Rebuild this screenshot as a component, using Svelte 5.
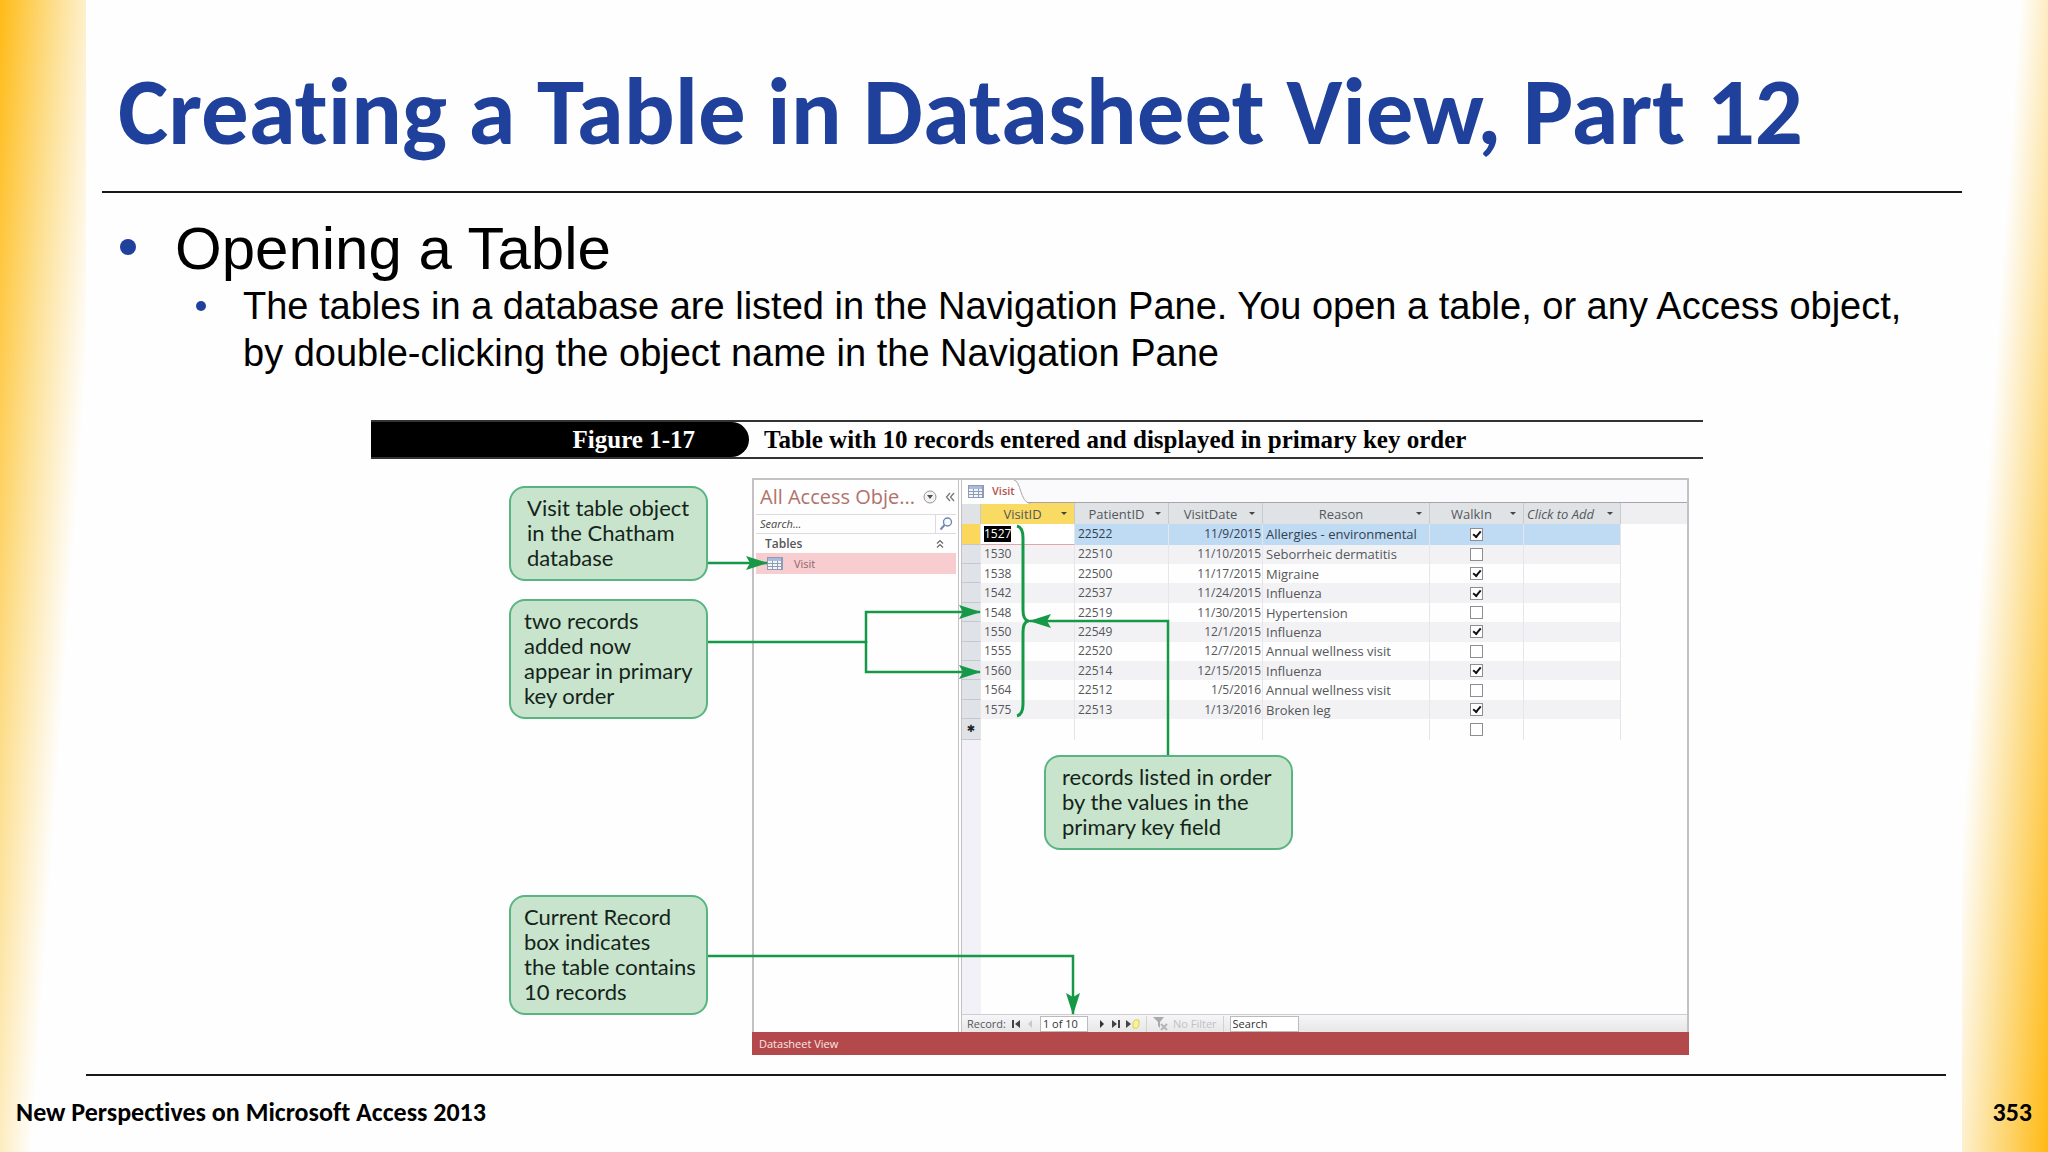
<script>
  const columns = ['VisitID', 'PatientID', 'VisitDate', 'Reason', 'WalkIn', 'Click to Add'];

  let records = [
    { id: 1527, patient: 22522, date: '11/9/2015', reason: 'Allergies - environmental', walkIn: true },
    { id: 1530, patient: 22510, date: '11/10/2015', reason: 'Seborrheic dermatitis', walkIn: false },
    { id: 1538, patient: 22500, date: '11/17/2015', reason: 'Migraine', walkIn: true },
    { id: 1542, patient: 22537, date: '11/24/2015', reason: 'Influenza', walkIn: true },
    { id: 1548, patient: 22519, date: '11/30/2015', reason: 'Hypertension', walkIn: false },
    { id: 1550, patient: 22549, date: '12/1/2015', reason: 'Influenza', walkIn: true },
    { id: 1555, patient: 22520, date: '12/7/2015', reason: 'Annual wellness visit', walkIn: false },
    { id: 1560, patient: 22514, date: '12/15/2015', reason: 'Influenza', walkIn: true },
    { id: 1564, patient: 22512, date: '1/5/2016', reason: 'Annual wellness visit', walkIn: false },
    { id: 1575, patient: 22513, date: '1/13/2016', reason: 'Broken leg', walkIn: true }
  ];

  let currentRecord = '1 of 10';
  let recordSearch = 'Search';
  let newWalkIn = false;
</script>

{#snippet tableIcon()}
  <svg class="table-icon" viewBox="0 0 16 13" aria-hidden="true">
    <rect x="0" y="0" width="16" height="13" fill="#8d9bb5" />
    <rect x="1" y="1" width="13" height="3" fill="#a9bbd9" />
    <path d="M1 4h4v2H1zM6 4h4v2H6zM11 4h3v2h-3zM1 7h4v2H1zM6 7h4v2H6zM11 7h3v2h-3zM1 10h4v2H1zM6 10h4v2H6zM11 10h3v2h-3z" fill="#f2f6fc" />
  </svg>
{/snippet}

<div class="slide">
  <header>
    <h1>Creating a Table in Datasheet View, Part 12</h1>
  </header>

  <main>
    <ul class="points">
      <li>
        <p class="point">Opening a Table</p>
        <ul>
          <li>
            <p class="point sub">
              <span>The tables in a database are listed in the Navigation Pane. You open a table, or any Access object, by double-clicking the object name in the Navigation Pane</span>
            </p>
          </li>
        </ul>
      </li>
    </ul>

    <figure>
      <figcaption>
        <span class="number">Figure 1-17</span>
        <span class="caption">Table with 10 records entered and displayed in primary key order</span>
      </figcaption>

      <div class="window">
        <div class="panes">
          <nav>
            <div class="nav-title">
              <span>All Access Obje...</span>
              <button aria-label="Category">
                <svg width="14" height="14" viewBox="0 0 14 14">
                  <circle cx="7" cy="7" r="6" fill="#f4f2f2" stroke="#9a9494" />
                  <path d="M4 5h6L7 9z" fill="#554f4f" />
                </svg>
              </button>
              <button aria-label="Collapse">
                <svg width="10" height="10" viewBox="0 0 10 10">
                  <path d="M5 1L1.500 5L5 9M9 1L5.500 5L9 9" fill="none" stroke="#777" stroke-width="1.300" />
                </svg>
              </button>
            </div>
            <div class="nav-search">
              <input type="text" placeholder="Search..." aria-label="Search objects" />
              <button aria-label="Find">
                <svg width="14" height="14" viewBox="0 0 14 14">
                  <circle cx="8.500" cy="5" r="4" fill="#f7faff" stroke="#7189b0" stroke-width="1.400" />
                  <path d="M5.500 8L1.500 12.500" stroke="#7189b0" stroke-width="2" />
                </svg>
              </button>
            </div>
            <div class="nav-group">
              <span>Tables</span>
              <svg width="8" height="10" viewBox="0 0 8 10">
                <path d="M1 4.500L4 1.500L7 4.500M1 8.500L4 5.500L7 8.500" fill="none" stroke="#666" stroke-width="1.200" />
              </svg>
            </div>
            <a class="nav-item" href="#visit">{@render tableIcon()} Visit</a>
          </nav>

          <section class="sheet" id="visit">
            <div class="tabs">
              <svg class="tab-shape" viewBox="0 0 68 24" aria-hidden="true">
                <path d="M0 24V0H52C59 1 58 22 68 23.500V24" fill="#fefefe" />
                <path d="M52 0C59 1 58 22 68 23.500" fill="none" stroke="#a9a5a7" />
              </svg>
              <span class="tab">{@render tableIcon()} Visit</span>
            </div>
            <div class="grid">
              <table>
                <colgroup>
                  <col class="c-select" />
                  <col class="c-id" />
                  <col class="c-id" />
                  <col class="c-id" />
                  <col class="c-reason" />
                  <col class="c-id" />
                  <col class="c-add" />
                </colgroup>
                <thead>
                  <tr>
                    <th class="selector"></th>
                    {#each columns as column, i}
                      <th class:active={i === 0} class:add={i === 5}>
                        <button><span>{column}</span><i></i></button>
                      </th>
                    {/each}
                    <th class="rest"></th>
                  </tr>
                </thead>
                <tbody>
                  {#each records as record, i}
                    <tr class:current={i === 0}>
                      <td class="selector"></td>
                      <td class="id"><span>{record.id}</span></td>
                      <td>{record.patient}</td>
                      <td class="date">{record.date}</td>
                      <td class="reason">{record.reason}</td>
                      <td class="check">
                        <input type="checkbox" bind:checked={record.walkIn} aria-label="WalkIn {record.id}" />
                      </td>
                      <td></td>
                      <td class="rest"></td>
                    </tr>
                  {/each}
                  <tr>
                    <td class="selector star">✱</td>
                    <td></td>
                    <td></td>
                    <td></td>
                    <td></td>
                    <td class="check">
                      <input type="checkbox" bind:checked={newWalkIn} aria-label="WalkIn new record" />
                    </td>
                    <td></td>
                    <td class="rest"></td>
                  </tr>
                </tbody>
              </table>
            </div>
            <div class="record-bar">
              <label for="record">Record:</label>
              <button aria-label="First record">
                <svg width="8" height="8" viewBox="0 0 8 8"><path d="M0 0h2v8H0zM8 0v8L3 4z" fill="#444" /></svg>
              </button>
              <button aria-label="Previous record">
                <svg width="8" height="8" viewBox="0 0 8 8"><path d="M6 0v8L2 4z" fill="#c9c9cc" /></svg>
              </button>
              <input id="record" class="position" type="text" bind:value={currentRecord} />
              <button aria-label="Next record">
                <svg width="8" height="8" viewBox="0 0 8 8"><path d="M2 0v8l4-4z" fill="#333" /></svg>
              </button>
              <button aria-label="Last record">
                <svg width="8" height="8" viewBox="0 0 8 8"><path d="M0 0v8l5-4zM6 0h2v8H6z" fill="#444" /></svg>
              </button>
              <button aria-label="New record">
                <svg width="14" height="10" viewBox="0 0 14 10">
                  <path d="M0 1v8l5-4z" fill="#444" />
                  <path d="M7 3l2-2h4v6l-2 2H7z" fill="#f6efae" stroke="#e2d23c" />
                </svg>
              </button>
              <span class="filter">
                <svg width="16" height="15" viewBox="0 0 16 15">
                  <path d="M0 1h11L7 6v6L5 10V6z" fill="#aaa9ac" />
                  <path d="M8 8l6 6M14 8l-6 6" stroke="#b5b4b7" stroke-width="2" />
                </svg>
                No Filter
              </span>
              <input class="search" type="text" bind:value={recordSearch} aria-label="Search records" />
            </div>
          </section>
        </div>
        <div class="status">Datasheet View</div>
      </div>

      <!-- callout connectors, in figure coordinates -->
      <svg class="arrows" width="1332" height="635" viewBox="0 0 1332 635" aria-hidden="true">
        <defs>
          <marker id="head" viewBox="0 0 22 14" refX="21" refY="7" markerWidth="22" markerHeight="14" markerUnits="userSpaceOnUse" orient="auto">
            <path d="M0 0L22 7L0 14L4 7z" fill="#159947" />
          </marker>
        </defs>
        <g fill="none" stroke="#159947" stroke-width="2.500">
          <path d="M336 143H396" marker-end="url(#head)" />
          <path d="M336 222H495" />
          <path d="M495 223V192H609" marker-end="url(#head)" />
          <path d="M495 221V252H609" marker-end="url(#head)" />
          <path d="M797 335V201H659" marker-end="url(#head)" />
          <path d="M336 536H702V594" marker-end="url(#head)" />
          <path d="M646 106C650 107 652 110 652 118V190C652 197 654 200 657 201C654 202 652 205 652 212V284C652 292 650 295 646 296" stroke-width="3" />
        </g>
      </svg>

      <p class="callout one">Visit table object<br />in the Chatham<br />database</p>
      <p class="callout two">two records<br />added now<br />appear in primary<br />key order</p>
      <p class="callout three">Current Record<br />box indicates<br />the table contains<br />10 records</p>
      <p class="callout four">records listed in order<br />by the values in the<br />primary key field</p>
    </figure>
  </main>

  <footer>
    <hr />
    <div class="foot">
      <span>New Perspectives on Microsoft Access 2013</span>
      <span>353</span>
    </div>
  </footer>
</div>

<style>
  :global(body) {
    margin: 0;
  }

  .slide {
    min-height: 100vh;
    display: flex;
    flex-direction: column;
    background:
      linear-gradient(94deg, #ffbb16 0, #fddf90 56px, #fefefe 112px) left / 86px 100% no-repeat,
      linear-gradient(274deg, #ffb912 0, #fddc88 54px, #fefefe 108px) right / 86px 100% no-repeat,
      #fefefe;
    color: #000;
    font-family: "Liberation Sans", Arial, sans-serif;
  }

  p, ul, figure {
    margin: 0;
    padding: 0;
  }

  ul {
    list-style: none;
  }

  button {
    display: flex;
    align-items: center;
    padding: 0;
    border: none;
    background: none;
    color: inherit;
    font: inherit;
  }

  header {
    margin: 0 86px 0 102px;
    padding: 62px 16px 29px;
    border-bottom: 2px solid #1a1518;
  }

  h1 {
    margin: 0;
    color: #1f419b;
    font: bold 95px/100px Carlito, Calibri, Lato, sans-serif;
    font-variant-ligatures: none;
    white-space: nowrap;
  }

  main {
    flex: 1;
    padding: 22px 102px 0 118px;
  }

  .point {
    display: flex;
    font-size: 60px;
    line-height: 68px;
  }

  .point::before {
    content: "";
    flex: none;
    width: 16px;
    height: 16px;
    margin: 24px 39px 0 2px;
    border-radius: 50%;
    background: #1f419b;
  }

  .sub {
    padding-left: 76px;
    font-size: 38px;
    line-height: 47px;
  }

  .sub::before {
    width: 10px;
    height: 10px;
    margin: 18px 37px 0 2px;
  }

  figure {
    position: relative;
    max-width: 1332px;
    margin: 43px 0 0 253px;
  }

  figcaption {
    display: flex;
    align-items: stretch;
    border: solid #333;
    border-width: 2px 0;
    font: bold 25px/35px "Liberation Serif", "Times New Roman", serif;
  }

  .number {
    width: 324px;
    padding-right: 54px;
    border-radius: 0 19px 19px 0;
    background: #000;
    color: #fff;
    text-align: right;
  }

  .caption {
    padding-left: 15px;
  }

  .window {
    margin: 19px 14px 0 381px;
    border: 2px solid #c4c0c3;
    border-bottom: none;
    font: 12px/16px "Open Sans", "Noto Sans", sans-serif;
    color: #55575b;
  }

  .panes {
    display: flex;
    height: 552px;
  }

  nav {
    width: 200px;
    padding: 0 2px;
    border-right: 4px double #c4c0c3;
  }

  .nav-title {
    display: flex;
    align-items: center;
    gap: 8px;
    height: 34px;
    padding: 0 6px 0 4px;
    color: #b0736b;
    font-size: 20px;
    white-space: nowrap;
  }

  .nav-title span {
    flex: 1;
  }

  .nav-search {
    display: flex;
    height: 18px;
    border: solid #dcdbe0;
    border-width: 1px 0;
  }

  .nav-search input {
    flex: 1;
    min-width: 0;
    padding: 0 4px;
    border: none;
    background: none;
    font: italic 11px/16px "Open Sans", sans-serif;
  }

  .nav-search input::placeholder {
    color: #444;
  }

  .nav-search button {
    padding: 0 3px;
    border-left: 1px solid #dcdbe0;
  }

  .nav-group {
    display: flex;
    align-items: center;
    justify-content: space-between;
    height: 19px;
    padding: 0 12px 0 9px;
    font-weight: 600;
  }

  .nav-item {
    display: flex;
    align-items: center;
    gap: 11px;
    height: 21px;
    padding-left: 11px;
    background: #f8cdd0;
    color: #8b6569;
    font-size: 11px;
    text-decoration: none;
  }

  .table-icon {
    width: 16px;
    height: 13px;
  }

  .sheet {
    flex: 1;
    min-width: 0;
    display: flex;
    flex-direction: column;
  }

  .tabs {
    position: relative;
    height: 22px;
    border-bottom: 1px solid #a9a5a7;
    background: #faf9fb;
  }

  .tab-shape {
    position: absolute;
    left: 0;
    top: 0;
    width: 68px;
    height: 24px;
  }

  .tab {
    position: relative;
    display: flex;
    align-items: center;
    gap: 8px;
    height: 22px;
    padding-left: 6px;
    color: #b3544f;
    font-size: 11px;
    font-weight: 600;
  }

  .grid {
    flex: 1;
    background: linear-gradient(90deg, #f1f1f7 19px, #fefefe 19px);
  }

  table {
    width: 100%;
    height: 237px;
    border-collapse: separate;
    border-spacing: 0;
    table-layout: fixed;
  }

  .c-select {
    width: 19px;
  }

  .c-id {
    width: 94px;
  }

  .c-reason {
    width: 167px;
  }

  .c-add {
    width: 97px;
  }

  th, td {
    box-sizing: border-box;
    padding: 0 3px;
    border-right: 1px solid #e6e6ea;
    line-height: 16px;
    white-space: nowrap;
  }

  th {
    height: 21px;
    background: #dfe3e6;
    border-right-color: #c6cace;
    font-size: 13px;
    font-weight: normal;
  }

  th button {
    width: 100%;
  }

  th span {
    flex: 1;
  }

  th i {
    margin-right: 4px;
    border: solid transparent;
    border-width: 3px 3px 0;
    border-top-color: #444;
  }

  .active {
    background: #f9da62;
  }

  .add {
    font-style: italic;
  }

  .add span {
    text-align: left;
  }

  tbody tr:nth-child(even) td {
    background: #f2f2f4;
  }

  tbody .current td {
    background: #bfdaf3;
    color: #33404f;
  }

  tbody .current .id {
    background: #fff;
    border-bottom: 1px solid #e3a5a8;
    color: #fff;
  }

  .current .id span {
    display: inline-block;
    background: #000;
  }

  tbody tr .selector.selector {
    padding: 0;
    background: #dfe3e8;
    border-bottom: 1px solid #c3c8cf;
    text-align: center;
  }

  tbody .current .selector.selector {
    background: #fbd75b;
  }

  tbody tr .star.star {
    color: #222;
    font: 10px/16px "DejaVu Sans", sans-serif;
  }

  th.rest {
    background: #efeff1;
    border: none;
  }

  tbody tr .rest.rest {
    background: none;
    border: none;
  }

  .date {
    padding-right: 1px;
    text-align: right;
  }

  .reason {
    font-size: 13px;
  }

  .check {
    text-align: center;
  }

  .check input {
    appearance: none;
    display: block;
    position: relative;
    width: 13px;
    height: 13px;
    margin: 0 auto;
    border: 1px solid #8d8d92;
    background: #fff;
  }

  .check input:checked::after {
    content: "";
    position: absolute;
    left: 2px;
    top: 2px;
    width: 6px;
    height: 3px;
    border: solid #111;
    border-width: 0 0 2px 2px;
    transform: rotate(-50deg);
  }

  .record-bar {
    display: flex;
    align-items: center;
    gap: 6px;
    height: 17px;
    padding-left: 5px;
    border-top: 1px solid #cfcdd1;
    background: linear-gradient(#f6f5f7, #e8e7e8);
    font-size: 11px;
  }

  .record-bar input {
    box-sizing: border-box;
    height: 16px;
    padding: 0 2px;
    border: 1px solid #bbb;
    background: #fff;
    color: #333;
    font: 11px/14px "Open Sans", sans-serif;
  }

  .record-bar .position {
    width: 48px;
    margin-right: 4px;
  }

  .record-bar .search {
    width: 69px;
  }

  .filter {
    display: flex;
    align-items: center;
    gap: 4px;
    padding: 0 6px;
    border: solid #d3d2d5;
    border-width: 0 1px;
    color: #c2c1c4;
  }

  .status {
    margin: 0 -2px;
    padding-left: 7px;
    background: #b4494c;
    color: #fbe6e4;
    font-size: 11px;
    line-height: 23px;
  }

  .arrows {
    position: absolute;
    left: 0;
    top: 0;
  }

  .callout {
    position: absolute;
    box-sizing: border-box;
    width: 199px;
    padding: 7px 10px 9px 16px;
    border: 2px solid #58b582;
    border-radius: 16px;
    background: #c9e4cc;
    color: #14241a;
    font: 22px/25px Lato, sans-serif;
    white-space: nowrap;
  }

  .one {
    left: 138px;
    top: 66px;
  }

  .two,
  .three {
    left: 138px;
    padding-left: 13px;
  }

  .two {
    top: 179px;
  }

  .three {
    top: 475px;
  }

  .four {
    left: 673px;
    top: 335px;
    width: 249px;
  }

  hr {
    height: 2px;
    margin: 0 102px 0 86px;
    border: none;
    background: #1a1518;
  }

  .foot {
    display: flex;
    justify-content: space-between;
    padding: 22px 16px 26px;
    font: bold 26px/28px Carlito, Calibri, Lato, sans-serif;
    font-variant-ligatures: none;
  }
</style>
